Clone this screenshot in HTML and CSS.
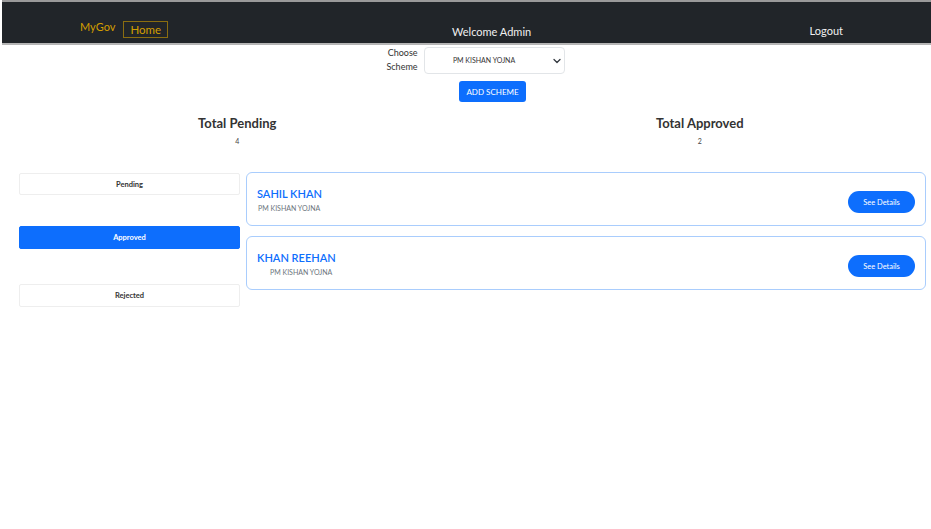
FILE: index.html
```html
<!DOCTYPE html>
<html>
<head>
<meta charset="utf-8">
<link rel="stylesheet" href="styles.css">
</head>
<body>
<nav class="navbar">
  <div class="brand-group">
    <span class="brand">MyGov</span>
    <span class="home-link">Home</span>
  </div>
  <div class="welcome">Welcome Admin</div>
  <div class="logout">Logout</div>
</nav>

<div class="scheme-row">
  <label class="scheme-label">Choose<br>Scheme</label>
  <div class="select">
    <span class="select-text">PM KISHAN YOJNA</span>
    <svg class="chev" width="8" height="6" viewBox="0 0 8 6"><path d="M1 1.5 L4 4.5 L7 1.5" fill="none" stroke="#343a40" stroke-width="1.3" stroke-linecap="round" stroke-linejoin="round"/></svg>
  </div>
</div>
<div class="add-row">
  <button class="btn-add">ADD SCHEME</button>
</div>

<div class="stats">
  <div class="stat">
    <div class="stat-title">Total Pending</div>
    <div class="stat-num">4</div>
  </div>
  <div class="stat">
    <div class="stat-title">Total Approved</div>
    <div class="stat-num">2</div>
  </div>
</div>

<div class="main">
  <div class="sidebar">
    <div class="tab tab-pending">Pending</div>
    <div class="tab tab-active">Approved</div>
    <div class="tab tab-rejected">Rejected</div>
  </div>
  <div class="cards">
    <div class="card">
      <div class="card-info">
        <div class="card-name">SAHIL KHAN</div>
        <div class="card-sub">PM KISHAN YOJNA</div>
      </div>
      <button class="btn-details">See Details</button>
    </div>
    <div class="card">
      <div class="card-info">
        <div class="card-name">KHAN REEHAN</div>
        <div class="card-sub indent">PM KISHAN YOJNA</div>
      </div>
      <button class="btn-details">See Details</button>
    </div>
  </div>
</div>
</body>
</html>
```
FILE: styles.css
```css
* { box-sizing: border-box; }
body {
  margin: 0;
  font-family: Lato, "Open Sans", sans-serif;
  color: #212529;
  background: #fff;
}
.navbar {
  display: flex;
  align-items: flex-end;
  height: 45px;
  background: #212529;
  border-top: 2px solid #9a9a9a;
  border-bottom: 2px solid #b5b5b5;
  margin-left: 2px;
  padding-bottom: 6px;
}
.brand-group {
  display: flex;
  align-items: center;
  padding-left: 78px;
  width: 450px;
  margin-bottom: -1px;
}
.brand {
  color: #d39e00;
  font-size: 11px;
  margin-right: 8px;
  margin-top: -6px;
}
.home-link {
  color: #d39e00;
  font-size: 11.5px;
  border: 1px solid #8a6d10;
  padding: 0 6px;
  line-height: 15px;
}
.welcome {
  color: #f0f0f0;
  font-size: 11px;
  margin-bottom: -1px;
}
.logout {
  color: #f0f0f0;
  font-size: 11px;
  margin-left: auto;
  margin-right: 88px;
}
.scheme-row {
  display: flex;
  justify-content: center;
  align-items: center;
  padding-left: 20px;
  margin-top: 1px;
}
.scheme-label {
  font-size: 9px;
  text-align: right;
  color: #333;
  line-height: 14px;
  margin-right: 6px;
}
.select {
  width: 141px;
  height: 27px;
  border: 1px solid #e2e5e8;
  border-radius: 4px;
  display: flex;
  align-items: center;
  position: relative;
  justify-content: center;
  padding-right: 20px;
}
.select-text {
  font-size: 7px;
  color: #333;
}
.chev {
  position: absolute;
  right: 3px;
  top: 10px;
}
.add-row {
  display: flex;
  justify-content: center;
  padding-left: 54px;
  margin-top: 7px;
}
.btn-add {
  font-family: inherit;
  background: #0d6efd;
  color: #fff;
  border: none;
  border-radius: 3px;
  font-size: 8px;
  width: 67px;
  height: 21px;
  padding: 0;
}
.stats {
  display: grid;
  grid-template-columns: 1fr 1fr;
  padding-left: 6px;
  margin-top: 11px;
}
.stat {
  text-align: center;
}
.stat-title {
  font-weight: bold;
  font-size: 13px;
  line-height: 20px;
  color: #333;
}
.stat-num {
  font-size: 7px;
  color: #444;
  margin-top: 4px;
}
.main {
  display: flex;
  gap: 6px;
  padding: 0 5px 0 19px;
  margin-top: 27px;
}
.sidebar {
  width: 221px;
  flex-shrink: 0;
  padding-top: 1px;
}
.tab {
  height: 22px;
  font-size: 7.5px;
  font-weight: bold;
  display: flex;
  align-items: center;
  justify-content: center;
  color: #333;
  border: 1px solid #eeeeee;
  border-radius: 2px;
}
.tab-active {
  background: #0d6efd;
  border-color: #0d6efd;
  color: #fff;
  margin-top: 31px;
  height: 23px;
}
.tab-rejected {
  margin-top: 35px;
  height: 23px;
}
.cards {
  flex: 1;
  display: flex;
  flex-direction: column;
  gap: 10px;
}
.card {
  height: 54px;
  border: 1px solid #a9cdfd;
  border-radius: 6px;
  display: flex;
  align-items: center;
  padding: 0 10px 0 10px;
}
.card-info {
  flex: 1;
  padding-bottom: 1px;
}
.card-name {
  color: #0d6efd;
  font-size: 11px;
  font-weight: 600;
  line-height: 15px;
}
.card-sub {
  font-size: 7px;
  color: #6c757d;
  margin-top: 3px;
  padding-left: 1px;
}
.card-sub.indent {
  padding-left: 13px;
}
.btn-details {
  font-family: inherit;
  background: #0d6efd;
  color: #fff;
  border: none;
  border-radius: 12px;
  width: 67px;
  height: 22px;
  font-size: 7.5px;
  padding: 0;
  margin-top: 6px;
}
```
